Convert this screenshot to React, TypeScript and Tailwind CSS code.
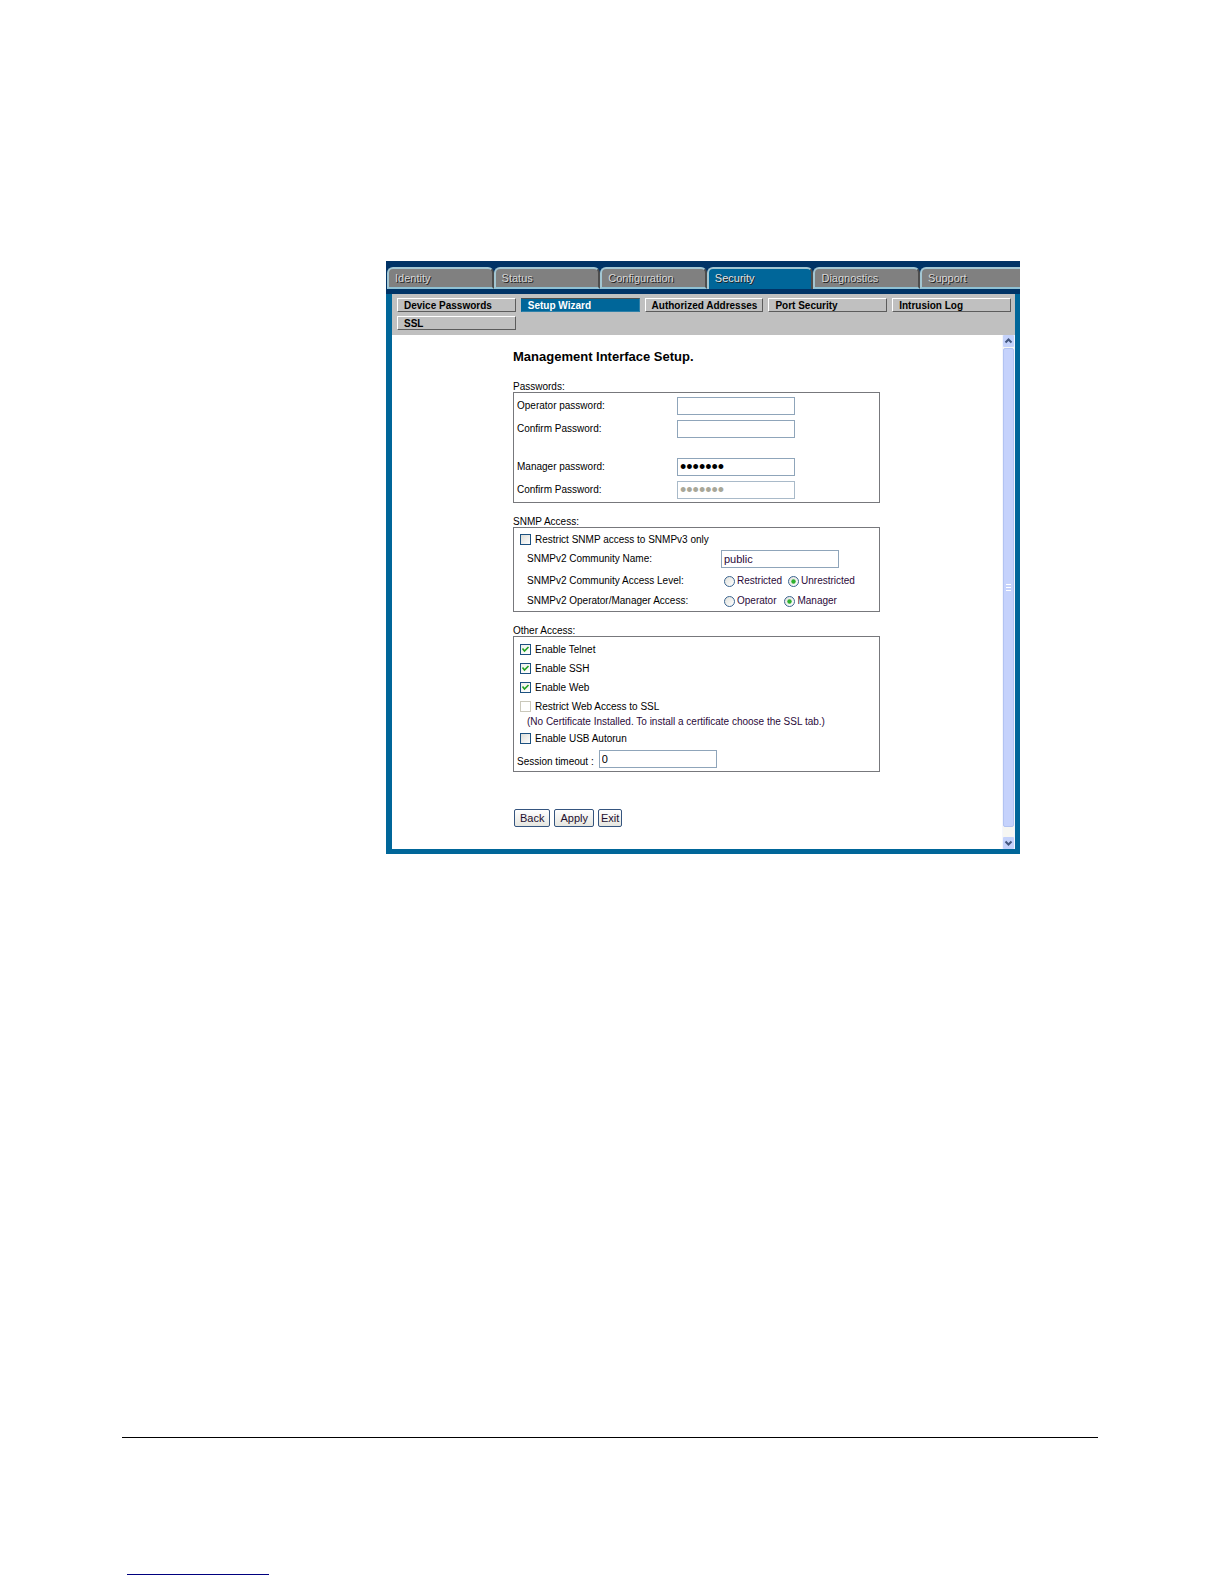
import { clsx } from "clsx";

const tabs = ["Identity", "Status", "Configuration", "Security", "Diagnostics", "Support"];

const pages = [
  "Device Passwords",
  "Setup Wizard",
  "Authorized Addresses",
  "Port Security",
  "Intrusion Log",
  "SSL",
];

const fieldClass =
  "w-[118px] h-[18px] border border-[#8fa5ba] bg-white px-[2px] outline-none text-[11px]";

const TabBar = () => (
  <nav aria-label="Main" className="bg-[#003366] pt-[6px] pb-[5px] pl-px">
    <div className="grid grid-cols-[repeat(5,16fr)_15fr]">
      {tabs.map((tab) => {
        const active = tab === "Security";
        const last = tab === "Support";
        return (
          <a
            key={tab}
            href={`#${tab.toLowerCase()}`}
            aria-current={active ? "page" : undefined}
            className={clsx(
              "block h-[22px] border-t-2 border-l-2 border-[#a3c6d2] pl-[6px] text-[11px] leading-[19px] [text-shadow:1px_1px_0_#222]",
              last ? "rounded-tl-[6px]" : "rounded-t-[6px] border-r-2 border-r-[#4d4d4d]",
              active
                ? "bg-[#006699] text-[#e4e4e4]"
                : "border-b-2 border-b-[#8fc1d4] bg-[#808080] text-[#d6d6d6]"
            )}
          >
            {tab}
          </a>
        );
      })}
    </div>
  </nav>
);

const PageBar = () => (
  <nav aria-label="Security" className="bg-[#c0c0c0] pt-1 pb-[5px] pl-[5px] pr-1">
    <div className="grid grid-cols-5 gap-x-[5px] gap-y-1">
      {pages.map((page) => (
        <a
          key={page}
          href={`#${page.toLowerCase().replace(" ", "-")}`}
          className={clsx(
            "block h-[14px] border pl-[6px] text-[10px] font-bold leading-[14px] whitespace-nowrap",
            page === "Setup Wizard"
              ? "border-t-[#4d4d4d] border-l-[#006699] border-r-[#2f80a8] border-b-[#2f80a8] bg-[#006699] text-white"
              : "border-t-white border-l-white border-r-[#5c5c5c] border-b-[#5c5c5c] text-black"
          )}
        >
          {page}
        </a>
      ))}
    </div>
  </nav>
);

const Arrow = ({ down = false }: { down?: boolean }) => (
  <svg viewBox="0 0 11 12" className="h-3 w-full" aria-hidden="true">
    <rect width="11" height="12" rx="1" fill="#c4d2fb" />
    <path
      d={down ? "M2.5 4.5 L5.5 7.5 L8.5 4.5" : "M2.5 7.5 L5.5 4.5 L8.5 7.5"}
      fill="none"
      stroke="#43567f"
      strokeWidth="2"
    />
  </svg>
);

const ScrollBar = () => (
  <div className="flex w-[13px] shrink-0 flex-col border-x border-[#f4f6fd] bg-[#f6f6f2]">
    <Arrow />
    <div className="mt-px flex flex-1 flex-col items-center justify-center gap-[2px] rounded-[2px] border border-[#b2c3f2] bg-[#c5d2fc]">
      <span className="h-px w-[5px] bg-white" />
      <span className="h-px w-[5px] bg-white" />
      <span className="h-px w-[5px] bg-white" />
    </div>
    <div className="h-[10px]" />
    <Arrow down />
  </div>
);

const PasswordRow = ({
  id,
  label,
  value,
  disabled,
}: {
  id: string;
  label: string;
  value?: string;
  disabled?: boolean;
}) => (
  <div className="flex items-center">
    <label htmlFor={id} className="w-[160px]">
      {label}
    </label>
    <input
      id={id}
      type="password"
      defaultValue={value}
      disabled={disabled}
      className={clsx(
        "h-[18px] w-[118px] border bg-white px-[2px] text-[18px] leading-4 outline-none",
        disabled ? "border-[#a9bac9] text-[#a8a799]" : "border-[#8fa5ba] text-black"
      )}
    />
  </div>
);

const Check = ({
  label,
  checked,
  disabled,
}: {
  label: string;
  checked?: boolean;
  disabled?: boolean;
}) => (
  <label className="flex h-[19px] items-center gap-1 pl-[6px]">
    <span className="relative flex">
      <input
        type="checkbox"
        defaultChecked={checked}
        disabled={disabled}
        className="peer h-[11px] w-[11px] appearance-none border border-[#1c5180] bg-linear-to-br from-[#dcdcd7] to-white checked:from-[#f0f0ec] disabled:border-[#cac8bb] disabled:from-white"
      />
      <svg
        viewBox="0 0 11 11"
        aria-hidden="true"
        className="pointer-events-none absolute inset-0 hidden h-[11px] w-[11px] peer-checked:block"
      >
        <path d="M2.5 4.5 L4.5 7 L8.5 3" fill="none" stroke="#21a121" strokeWidth="1.6" />
      </svg>
    </span>
    {label}
  </label>
);

const Radio = ({ name, label, checked }: { name: string; label: string; checked?: boolean }) => (
  <label className="flex items-center gap-[2px] text-[#2b0a3a]">
    <span className="relative flex">
      <input
        type="radio"
        name={name}
        defaultChecked={checked}
        className="peer h-[11px] w-[11px] appearance-none rounded-full border border-[#3b6490] bg-linear-to-br from-[#e2e2dc] to-white"
      />
      <svg
        viewBox="0 0 11 11"
        aria-hidden="true"
        className="pointer-events-none absolute inset-0 hidden h-[11px] w-[11px] peer-checked:block"
      >
        <circle cx="5.5" cy="5.5" r="2.2" fill="#2fb02f" />
      </svg>
    </span>
    {label}
  </label>
);

const Group = ({
  title,
  className,
  children,
}: {
  title: string;
  className: string;
  children: React.ReactNode;
}) => (
  <fieldset>
    <legend className="h-3 leading-[14px]">{title}</legend>
    <div className={clsx("border border-[#77787c]", className)}>{children}</div>
  </fieldset>
);

const SetupForm = () => (
  <form
    className="max-w-[367px] flex-1 text-[10px] leading-3"
    onSubmit={(e) => e.preventDefault()}
  >
    <h1 className="mb-[15px] text-[13px] font-bold leading-4">Management Interface Setup.</h1>

    <div className="flex flex-col gap-3">
      <Group title="Passwords:" className="flex flex-col gap-5 pt-1 pb-[3px] pl-[3px]">
        <div className="flex flex-col gap-[5px]">
          <PasswordRow id="operator" label="Operator password:" />
          <PasswordRow id="operator-confirm" label="Confirm Password:" />
        </div>
        <div className="flex flex-col gap-[5px]">
          <PasswordRow id="manager" label="Manager password:" value="manager" />
          <PasswordRow id="manager-confirm" label="Confirm Password:" value="manager" disabled />
        </div>
      </Group>

      <Group title="SNMP Access:" className="pt-[2px]">
        <Check label="Restrict SNMP access to SNMPv3 only" />
        <div className="mt-px flex items-center pl-[13px]">
          <label htmlFor="community" className="w-[194px]">
            SNMPv2 Community Name:
          </label>
          <input
            id="community"
            type="text"
            defaultValue="public"
            className={clsx(fieldClass, "text-[#2b0a3a]")}
          />
        </div>
        <div role="radiogroup" aria-labelledby="level" className="mt-[3px] flex h-5 items-center pl-[13px]">
          <span id="level" className="w-[197px]">
            SNMPv2 Community Access Level:
          </span>
          <div className="flex gap-[6px]">
            <Radio name="level" label="Restricted" />
            <Radio name="level" label="Unrestricted" checked />
          </div>
        </div>
        <div role="radiogroup" aria-labelledby="role" className="flex h-5 items-center pl-[13px]">
          <span id="role" className="w-[197px]">
            SNMPv2 Operator/Manager Access:
          </span>
          <div className="flex gap-2">
            <Radio name="role" label="Operator" />
            <Radio name="role" label="Manager" checked />
          </div>
        </div>
      </Group>

      <Group title="Other Access:" className="py-[3px]">
        <Check label="Enable Telnet" checked />
        <Check label="Enable SSH" checked />
        <Check label="Enable Web" checked />
        <Check label="Restrict Web Access to SSL" disabled />
        <p className="pl-[13px] text-[#2b0a3a]">
          (No Certificate Installed. To install a certificate choose the SSL tab.)
        </p>
        <div className="mt-px">
          <Check label="Enable USB Autorun" />
        </div>
        <div className="mt-[2px] flex items-end gap-[5px] pl-[3px]">
          <label htmlFor="timeout">Session timeout :</label>
          <input id="timeout" type="text" defaultValue="0" className={fieldClass} />
        </div>
      </Group>
    </div>

    <div className="mt-[37px] flex gap-1 pl-px">
      {["Back", "Apply", "Exit"].map((action) => (
        <button
          key={action}
          type="button"
          className="h-[18px] rounded-[2px] border border-[#35557f] bg-linear-to-b from-white to-[#e6e6e0] px-[5px] text-[11px] leading-4 text-[#1e0f2e] last:px-[2px]"
        >
          {action}
        </button>
      ))}
    </div>
  </form>
);

export default function App() {
  return (
    <div className="min-h-screen bg-white pt-[261px] pb-2 font-['Liberation_Sans',Arial,sans-serif] text-black">
      <main className="mr-[204px] ml-[386px]">
        <TabBar />
        <div className="border-r-[5px] border-b-[5px] border-l-[6px] border-[#006699]">
          <PageBar />
          <div className="flex">
            <div className="flex flex-1 pt-[14px] pb-[22px] pl-[121px]">
              <SetupForm />
            </div>
            <ScrollBar />
          </div>
        </div>
      </main>

      <footer className="mt-[583px]">
        <hr className="mr-[126px] ml-[122px] border-t border-black" />
        <div className="mt-[136px] ml-[127px] h-px w-[142px] bg-[#00007f]" />
      </footer>
    </div>
  );
}
